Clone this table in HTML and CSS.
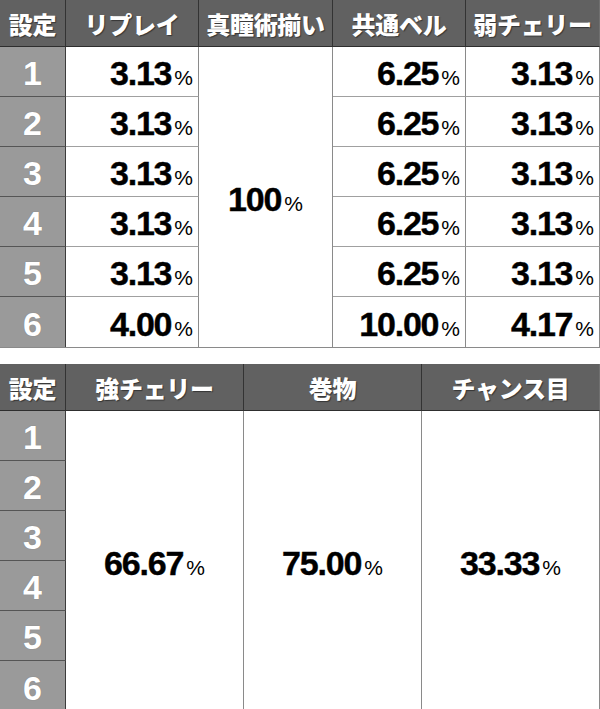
FILE: index.html
```html
<!DOCTYPE html>
<html lang="ja">
<head>
<meta charset="utf-8">
<link rel="stylesheet" href="styles.css">
</head>
<body>
<div class="page">
  <div class="grid grid-a">
    <div class="hd">設定</div>
    <div class="hd">リプレイ</div>
    <div class="hd">真瞳術揃い</div>
    <div class="hd">共通ベル</div>
    <div class="hd">弱チェリー</div>

    <div class="st">1</div>
    <div class="val">3.13<span class="pc">%</span></div>
    <div class="val merged mA">100<span class="pc">%</span></div>
    <div class="val">6.25<span class="pc">%</span></div>
    <div class="val">3.13<span class="pc">%</span></div>

    <div class="st">2</div>
    <div class="val">3.13<span class="pc">%</span></div>
    <div class="val">6.25<span class="pc">%</span></div>
    <div class="val">3.13<span class="pc">%</span></div>

    <div class="st">3</div>
    <div class="val">3.13<span class="pc">%</span></div>
    <div class="val">6.25<span class="pc">%</span></div>
    <div class="val">3.13<span class="pc">%</span></div>

    <div class="st">4</div>
    <div class="val">3.13<span class="pc">%</span></div>
    <div class="val">6.25<span class="pc">%</span></div>
    <div class="val">3.13<span class="pc">%</span></div>

    <div class="st">5</div>
    <div class="val">3.13<span class="pc">%</span></div>
    <div class="val">6.25<span class="pc">%</span></div>
    <div class="val">3.13<span class="pc">%</span></div>

    <div class="st">6</div>
    <div class="val">4.00<span class="pc">%</span></div>
    <div class="val">10.00<span class="pc">%</span></div>
    <div class="val">4.17<span class="pc">%</span></div>
  </div>

  <div class="grid grid-b">
    <div class="hd">設定</div>
    <div class="hd">強チェリー</div>
    <div class="hd">巻物</div>
    <div class="hd">チャンス目</div>

    <div class="st">1</div>
    <div class="val merged mB1">66.67<span class="pc">%</span></div>
    <div class="val merged mB2">75.00<span class="pc">%</span></div>
    <div class="val merged mB3">33.33<span class="pc">%</span></div>
    <div class="st">2</div>
    <div class="st">3</div>
    <div class="st">4</div>
    <div class="st">5</div>
    <div class="st">6</div>
  </div>
</div>
</body>
</html>
```

FILE: styles.css
```css
html, body {
  margin: 0;
  padding: 0;
  background: #ffffff;
}

.page {
  width: 600px;
  display: flex;
  flex-direction: column;
  gap: 16px;
}

.grid {
  display: grid;
  grid-template-rows: 47px repeat(6, 50px);
  box-sizing: border-box;
  border-bottom: 1px solid #8a8a8a;
}

.grid-a {
  grid-template-columns: 66px 133px 134px 133px 134px;
}

.grid-b {
  grid-template-columns: 66px 178px 178px 178px;
}

.hd {
  box-sizing: border-box;
  background: #616161;
  border-right: 1px solid #333333;
  border-bottom: 1px solid #2e2e2e;
  color: #ffffff;
  font-family: "Noto Sans CJK JP", "Noto Sans", sans-serif;
  font-weight: 900;
  font-size: 24px;
  display: flex;
  align-items: center;
  justify-content: center;
  text-shadow: 1px 1px 1px rgba(0, 0, 0, 0.45);
  letter-spacing: -0.3px;
  padding-top: 1px;
}

.grid-a .hd:nth-child(5),
.grid-b .hd:nth-child(4) {
  border-right: 1px solid #707070;
}

.st {
  grid-column: 1;
  box-sizing: border-box;
  background: #9a9a9a;
  border-right: 1px solid #3c3c3c;
  border-bottom: 1px solid #555555;
  color: #ffffff;
  font-family: "Liberation Sans", Arial, sans-serif;
  font-weight: 700;
  font-size: 34px;
  display: flex;
  align-items: center;
  justify-content: center;
  padding-top: 4px;
  text-shadow: 0 0 1px rgba(0, 0, 0, 0.25);
}

.grid .st:last-child,
.grid-a .st:nth-last-child(4) {
  border-bottom: none;
}

.val {
  box-sizing: border-box;
  background: #ffffff;
  border-right: 1px solid #8a8a8a;
  border-bottom: 1px solid #a0a0a0;
  color: #000000;
  font-family: "Liberation Sans", Arial, sans-serif;
  font-weight: 700;
  font-size: 34px;
  letter-spacing: -1.2px;
  -webkit-text-stroke: 0.4px #000000;
  display: flex;
  align-items: center;
  justify-content: flex-end;
  padding: 4px 5px 0 0;
}

.grid-a .val:nth-last-child(-n+3) {
  border-bottom: none;
}

.pc {
  font-size: 21px;
  letter-spacing: 0;
  -webkit-text-stroke: 0;
  font-weight: 400;
  margin-left: 3px;
  align-self: center;
  padding-top: 9px;
}

.merged {
  justify-content: center;
  padding-right: 0;
  border-bottom: none;
}

.mA {
  grid-column: 3;
  grid-row: 2 / span 6;
}

.mB1 {
  grid-column: 2;
  grid-row: 2 / span 6;
}

.mB2 {
  grid-column: 3;
  grid-row: 2 / span 6;
}

.mB3 {
  grid-column: 4;
  grid-row: 2 / span 6;
}
```
